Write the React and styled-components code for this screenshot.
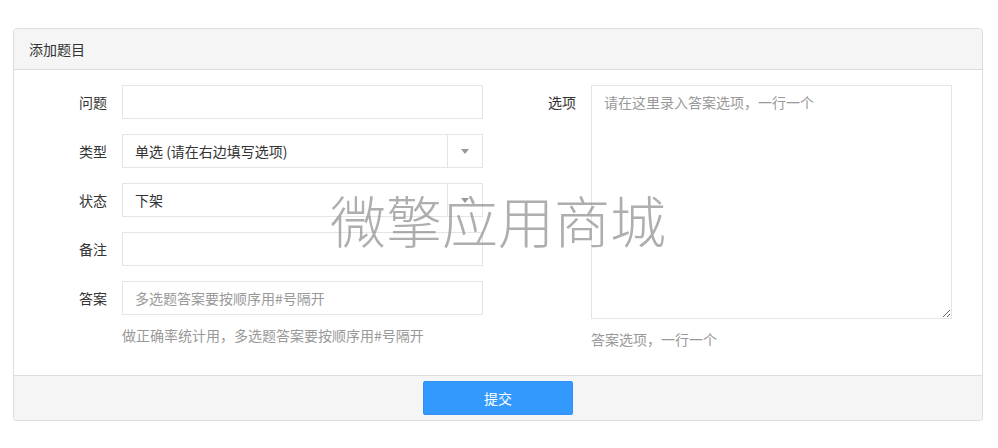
import styled, { createGlobalStyle } from "styled-components";

const GlobalStyle = createGlobalStyle`
  body {
    margin: 0;
    background: #fff;
    font-family: "Noto Sans CJK SC", "Noto Sans", sans-serif;
    font-size: 14px;
    color: #333;
  }
  * { box-sizing: border-box; }
`;

const Page = styled.div`
  position: relative;
  padding: 28px 15px 0 13px;
`;

const Panel = styled.div`
  border: 1px solid #ddd;
  border-radius: 4px;
  background: #fff;
  box-shadow: 0 1px 1px rgba(0, 0, 0, 0.05);
  overflow: hidden;
`;

const PanelHeading = styled.div`
  background: #f5f5f5;
  border-bottom: 1px solid #ddd;
  padding: 10px 15px;
  line-height: 20px;
  font-size: 14px;
  color: #333;
`;

const PanelBody = styled.div`
  display: grid;
  grid-template-columns: 469px 469px;
  padding: 15px 0 26px;
`;

const Column = styled.div`
  display: flex;
  flex-direction: column;
`;

const FormGroup = styled.div`
  display: flex;
  margin-bottom: ${(p) => (p.last ? "0" : "15px")};
`;

const Label = styled.label`
  width: 93px;
  padding-right: 0;
  text-align: right;
  line-height: 34px;
  color: #333;
  flex-shrink: 0;
`;

const Field = styled.div`
  width: 361px;
  margin-left: 15px;
`;

const Input = styled.input`
  display: block;
  width: 100%;
  height: 34px;
  padding: 6px 12px;
  border: 1px solid #e5e5e5;
  border-radius: 0;
  font: inherit;
  line-height: 20px;
  color: #333;
  outline: none;

  &::placeholder {
    color: #999;
  }
`;

const SelectBox = styled.div`
  display: flex;
  height: 34px;
  border: 1px solid #e5e5e5;
`;

const SelectValue = styled.div`
  flex: 1;
  padding: 6px 12px;
  line-height: 20px;
  color: #333;
`;

const SelectArrow = styled.div`
  width: 35px;
  border-left: 1px solid #e5e5e5;
  display: flex;
  align-items: center;
  justify-content: center;

  &::after {
    content: "";
    border-left: 4.5px solid transparent;
    border-right: 4.5px solid transparent;
    border-top: 5px solid #999;
  }
`;

const TextArea = styled.textarea`
  display: block;
  width: 100%;
  height: 234px;
  padding: 6px 12px;
  border: 1px solid #e5e5e5;
  border-radius: 0;
  font: inherit;
  line-height: 20px;
  color: #333;
  outline: none;
  resize: vertical;

  &::placeholder {
    color: #999;
  }
`;

const HelpText = styled.div`
  margin-top: 10px;
  line-height: 20px;
  color: #999;
`;

const PanelFooter = styled.div`
  display: flex;
  justify-content: center;
  background: #f5f5f5;
  border-top: 1px solid #ddd;
  padding: 5px 0;
`;

const Button = styled.button`
  width: 150px;
  height: 34px;
  border: 1px solid #2f90f5;
  border-radius: 2px;
  background: #3399ff;
  color: #fff;
  font: inherit;
  font-size: 14px;
  cursor: pointer;
`;

const Watermark = styled.div`
  position: absolute;
  left: 330px;
  top: 187px;
  font-size: 56px;
  font-weight: 300;
  line-height: 64px;
  color: rgba(140, 140, 140, 0.7);
  pointer-events: none;
  white-space: nowrap;
`;

const Select = ({ value }) => (
  <SelectBox>
    <SelectValue>{value}</SelectValue>
    <SelectArrow />
  </SelectBox>
);

export default function App() {
  return (
    <>
      <GlobalStyle />
      <Page>
        <Panel>
          <PanelHeading>添加题目</PanelHeading>
          <PanelBody>
            <Column>
              <FormGroup>
                <Label>问题</Label>
                <Field>
                  <Input />
                </Field>
              </FormGroup>
              <FormGroup>
                <Label>类型</Label>
                <Field>
                  <Select value="单选 (请在右边填写选项)" />
                </Field>
              </FormGroup>
              <FormGroup>
                <Label>状态</Label>
                <Field>
                  <Select value="下架" />
                </Field>
              </FormGroup>
              <FormGroup>
                <Label>备注</Label>
                <Field>
                  <Input />
                </Field>
              </FormGroup>
              <FormGroup last>
                <Label>答案</Label>
                <Field>
                  <Input placeholder="多选题答案要按顺序用#号隔开" />
                  <HelpText>做正确率统计用，多选题答案要按顺序用#号隔开</HelpText>
                </Field>
              </FormGroup>
            </Column>
            <Column>
              <FormGroup last>
                <Label>选项</Label>
                <Field>
                  <TextArea placeholder="请在这里录入答案选项，一行一个" />
                  <HelpText>答案选项，一行一个</HelpText>
                </Field>
              </FormGroup>
            </Column>
          </PanelBody>
          <PanelFooter>
            <Button>提交</Button>
          </PanelFooter>
        </Panel>
        <Watermark>微擎应用商城</Watermark>
      </Page>
    </>
  );
}
